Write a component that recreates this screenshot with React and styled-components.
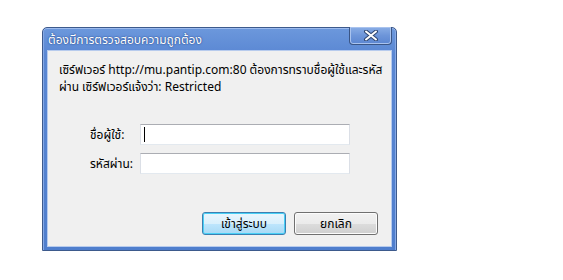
import styled, { createGlobalStyle } from "styled-components";

const GlobalStyle = createGlobalStyle`
  html, body {
    margin: 0;
    padding: 0;
    background: #ffffff;
  }
  body {
    font-family: Tahoma, "Noto Sans Thai", "Noto Sans", "DejaVu Sans", sans-serif;
    font-size: 12px;
  }
`;

const CloseIcon = () => (
  <svg width="16" height="11" viewBox="0 0 16 11">
    <path
      d="M3 1.5 L13 9.5 M13 1.5 L3 9.5"
      stroke="#2f4670"
      strokeWidth="4"
      strokeLinecap="round"
      fill="none"
    />
    <path
      d="M3 1.5 L13 9.5 M13 1.5 L3 9.5"
      stroke="#ffffff"
      strokeWidth="2"
      strokeLinecap="round"
      fill="none"
    />
  </svg>
);

const App = () => {
  return (
    <Page>
      <GlobalStyle />
      <Window>
        <TitleBar>
          <Title>ต้องมีการตรวจสอบความถูกต้อง</Title>
          <CloseButton aria-label="close">
            <CloseIcon />
          </CloseButton>
        </TitleBar>
        <Client>
          <Message>
            <Line>เซิร์ฟเวอร์ http://mu.pantip.com:80 ต้องการทราบชื่อผู้ใช้และรหัส</Line>
            <Line>ผ่าน เซิร์ฟเวอร์แจ้งว่า: Restricted</Line>
          </Message>
          <Form>
            <Row>
              <Label>ชื่อผู้ใช้:</Label>
              <Field>
                <Caret />
              </Field>
            </Row>
            <Row>
              <Label>รหัสผ่าน:</Label>
              <Field />
            </Row>
          </Form>
          <Actions>
            <Button $primary>เข้าสู่ระบบ</Button>
            <Button>ยกเลิก</Button>
          </Actions>
        </Client>
      </Window>
    </Page>
  );
};

export default App;

const Page = styled.div`
  padding: 27px 0 0 42px;
`;

const Window = styled.div`
  box-sizing: border-box;
  width: 355px;
  height: 224px;
  display: flex;
  flex-direction: column;
  padding: 0 4px 3px 4px;
  border: 1px solid #3d5a8c;
  border-radius: 5px 5px 0 0;
  background: linear-gradient(to bottom, #6c98dc 0%, #5a87d3 12%, #4f7ecd 100%);
  box-shadow: inset 0 1px 0 #9dbbee, inset 1px 0 0 #86a9e6, inset -1px 0 0 #86a9e6;
`;

const TitleBar = styled.div`
  height: 22px;
  display: flex;
  justify-content: space-between;
  align-items: flex-start;
  flex-shrink: 0;
`;

const Title = styled.div`
  color: #ffffff;
  font-size: 12px;
  font-weight: normal;
  line-height: 14px;
  padding: 5px 0 0 1px;
  text-shadow: 0 0 2px #2a4f94, 0 0 1px #2a4f94;
`;

const CloseButton = styled.button`
  box-sizing: border-box;
  width: 43px;
  height: 18px;
  margin: -1px 0 0 0;
  padding: 0;
  display: flex;
  align-items: center;
  justify-content: center;
  border: 1px solid #3a5585;
  border-top: none;
  border-radius: 0 0 4px 4px;
  background: linear-gradient(to bottom, #8aaee6 0%, #6d95d9 50%, #5b86d1 100%);
  box-shadow: inset 0 0 0 1px #a9c3ee;
`;

const Client = styled.div`
  flex: 1;
  display: flex;
  flex-direction: column;
  background: #f0f0f0;
  border: 1px solid #b7cbed;
`;

const Message = styled.div`
  display: flex;
  flex-direction: column;
  padding: 11px 0 0 11px;
`;

const Line = styled.div`
  color: #000000;
  font-size: 12px;
  line-height: 17px;
  white-space: nowrap;
`;

const Form = styled.div`
  display: flex;
  flex-direction: column;
  gap: 8px;
  margin-top: 28px;
  padding-left: 42px;
`;

const Row = styled.div`
  display: flex;
  align-items: center;
`;

const Label = styled.div`
  width: 50px;
  color: #000000;
  font-size: 12px;
`;

const Field = styled.div`
  box-sizing: border-box;
  width: 210px;
  height: 21px;
  background: #ffffff;
  border: 1px solid #dbdfe6;
  border-top-color: #abadb3;
  border-bottom-color: #e3e9ef;
  display: flex;
  align-items: center;
  padding-left: 3px;
`;

const Caret = styled.span`
  width: 1px;
  height: 15px;
  background: #000000;
`;

const Actions = styled.div`
  margin-top: auto;
  display: flex;
  justify-content: flex-end;
  gap: 8px;
  padding: 0 13px 11px 0;
`;

const Button = styled.button`
  box-sizing: border-box;
  width: 84px;
  height: 23px;
  font-family: inherit;
  font-size: 12px;
  color: #000000;
  border-radius: 3px;
  border: 1px solid ${(p) => (p.$primary ? "#3c7fb1" : "#707070")};
  background: ${(p) =>
    p.$primary
      ? "linear-gradient(to bottom, #eaf6fd 0%, #d9f0fc 50%, #bee6fd 50%, #a7d9f5 100%)"
      : "linear-gradient(to bottom, #f2f2f2 0%, #ebebeb 50%, #dddddd 50%, #cfcfcf 100%)"};
  box-shadow: ${(p) =>
    p.$primary ? "inset 0 0 0 1px #48d0f6" : "inset 0 0 0 1px #fcfcfc"};
  padding: 0;
`;
